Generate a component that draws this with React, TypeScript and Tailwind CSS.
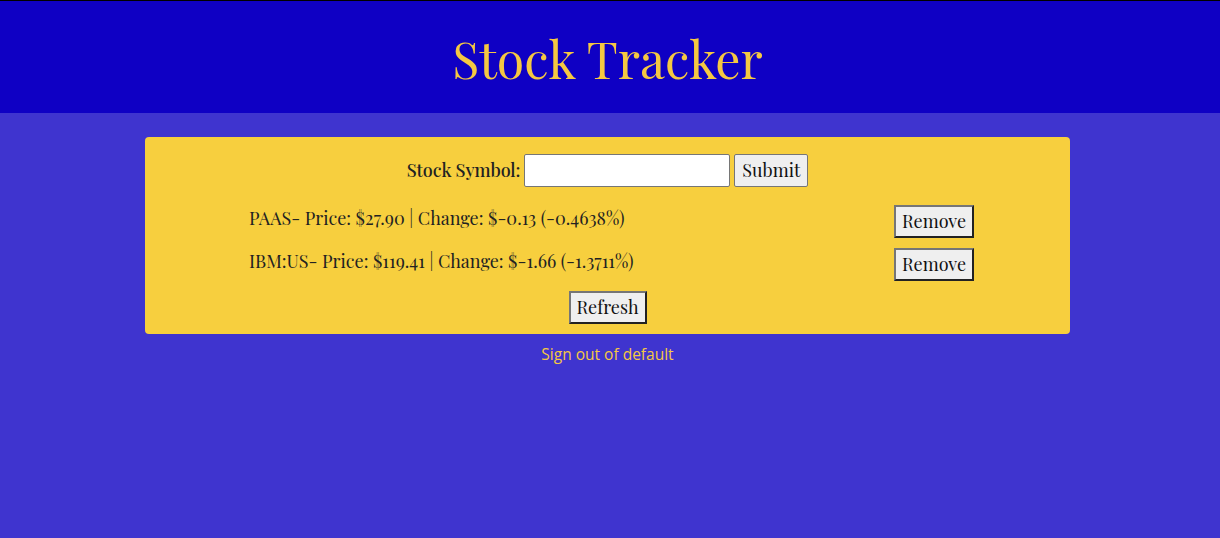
export default function App() {
  const stocks = [
    { symbol: 'PAAS', price: '27.90', change: '-0.13', pct: '-0.4638' },
    { symbol: 'IBM:US', price: '119.41', change: '-1.66', pct: '-1.3711' },
  ];

  const serif = "font-['Playfair_Display','Liberation_Serif',serif]";

  return (
    <div className="min-h-[538px] bg-[#3f34cf] border-t border-black">
      <header className="h-[112px] bg-[#0f00c4] flex items-center justify-center pr-[5px]">
        <h1 className={`${serif} text-[50px] text-[#f5c842] leading-none pt-1`}>Stock Tracker</h1>
      </header>

      <div className="w-[1215px] flex flex-col items-center pt-6">
        <div className={`${serif} w-[925px] bg-[#f7cf3e] rounded-[4px] pt-[17px] pb-[10px] text-[#222] text-[18px]`}>
          <form className="flex items-center justify-center gap-1" onSubmit={e => e.preventDefault()}>
            <label className="font-medium tracking-[-0.1px]">Stock Symbol:</label>
            <input className="w-[206px] h-[33px] bg-white border border-[#767676] rounded-[2px] px-1" />
            <button type="submit" className="h-[33px] px-[7px] bg-[#efefef] border border-[#767676] rounded-[2px] text-[#111]">
              Submit
            </button>
          </form>

          <ul className="mt-[18px] ml-[104px] mr-[96px] flex flex-col gap-[10px]">
            {stocks.map(s => (
              <li key={s.symbol} className="flex items-center justify-between">
                <span className="-mt-[6px]">
                  {s.symbol}- Price: ${s.price} | Change: ${s.change} ({s.pct}%)
                </span>
                <button className="w-[80px] h-[33px] bg-[#efefef] border-2 border-t-[#767676] border-l-[#767676] border-b-[#222] border-r-[#222] text-[#111]">
                  Remove
                </button>
              </li>
            ))}
          </ul>

          <div className="flex justify-center mt-[10px]">
            <button className="w-[78px] h-[33px] bg-[#efefef] border-2 border-t-[#767676] border-l-[#767676] border-b-[#222] border-r-[#222] text-[#111]">
              Refresh
            </button>
          </div>
        </div>

        <a href="#" className="mt-[9px] text-[15.5px] text-[#f5c842] font-['Open_Sans','Noto_Sans',sans-serif]">
          Sign out of default
        </a>
      </div>
    </div>
  );
}
